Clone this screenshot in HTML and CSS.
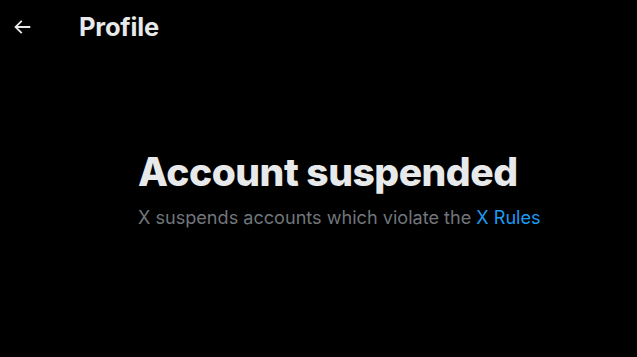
FILE: index.html
```html
<!DOCTYPE html>
<html lang="en">
<head>
<meta charset="utf-8">
<link rel="stylesheet" href="styles.css">
</head>
<body>
<div class="page">
  <header class="topbar">
    <button class="back" aria-label="Back">
      <svg viewBox="0 0 24 24" width="22" height="22"><path d="M7.414 13l5.043 5.04-1.414 1.42L3.586 12l7.457-7.46 1.414 1.42L7.414 11H21v2H7.414z" fill="#e7e9ea"/></svg>
    </button>
    <h2 class="title">Profile</h2>
  </header>
  <main class="content">
    <h1 class="headline">Account suspended</h1>
    <p class="sub">X suspends accounts which violate the <a class="link" href="#">X Rules</a></p>
  </main>
</div>
</body>
</html>
```
FILE: styles.css
```css
html, body {
  margin: 0;
  padding: 0;
  background: #000;
  height: 100%;
}
body {
  font-family: Inter, "Noto Sans", sans-serif;
  color: #e7e9ea;
}
.page {
  width: 637px;
  height: 357px;
}
.topbar {
  display: flex;
  align-items: center;
  height: 53px;
  padding: 0 11px;
  box-sizing: border-box;
}
.back {
  background: none;
  border: 0;
  padding: 0;
  width: 22px;
  height: 22px;
  display: flex;
  align-items: center;
  justify-content: center;
  margin-right: 46px;
  cursor: pointer;
}
.title {
  margin: 0;
  font-size: 25.5px;
  font-weight: 700;
  letter-spacing: -0.2px;
}
.content {
  padding: 97px 0 0 138px;
}
.headline {
  margin: 0;
  font-size: 39px;
  font-weight: 800;
  line-height: 44px;
  letter-spacing: -0.5px;
}
.sub {
  margin: 12px 0 0;
  font-size: 18.1px;
  line-height: 22px;
  color: #71767b;
}
.link {
  color: #1d9bf0;
  text-decoration: none;
}
```
